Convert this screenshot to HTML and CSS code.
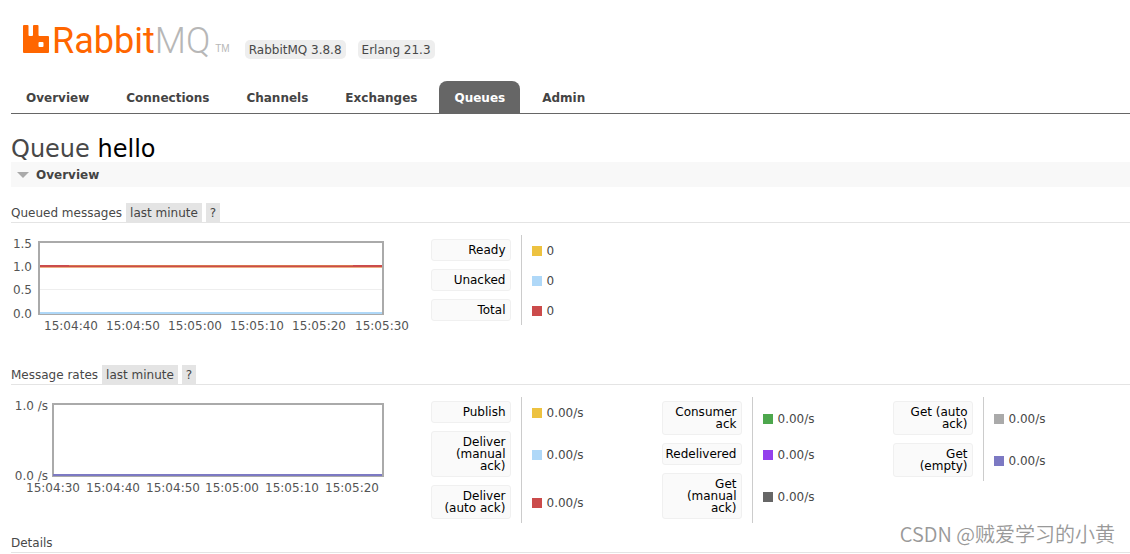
FILE: index.html
```
<!DOCTYPE html>
<html lang="en">
<head>
<meta charset="utf-8">
<meta name="viewport" content="width=device-width, initial-scale=1">
<title>RabbitMQ Management</title>
<link rel="stylesheet" href="styles.css">
</head>
<body>
<header class="header">
  <div class="brand-row">
    <a class="logo" href="#/">
      <svg class="logo-mark" width="26" height="28" viewBox="0 0 26 28" aria-hidden="true">
        <path fill="#f60" fill-rule="evenodd" d="M1 0H4.500Q5.500 0 5.500 1V10Q5.500 11 6.500 11H9Q10 11 10 10V1Q10 0 11 0H14.500Q15.500 0 15.500 1V10Q15.500 11 16.500 11H25Q26 11 26 12V27Q26 28 25 28H1Q0 28 0 27V1Q0 0 1 0ZM16.500 17Q15.500 17 15.500 18V21Q15.500 22 16.500 22H19.500Q20.500 22 20.500 21V18Q20.500 17 19.500 17Z"/>
      </svg>
      <span class="logo-text">Rabbit<span class="logo-mq">MQ</span></span>
      <span class="logo-tm">TM</span>
    </a>
    <ul class="versions">
      <li class="version">RabbitMQ 3.8.8</li>
      <li class="version">Erlang 21.3</li>
    </ul>
  </div>
  <nav class="tabs">
    <a class="tab" href="#/">Overview</a>
    <a class="tab" href="#/connections">Connections</a>
    <a class="tab" href="#/channels">Channels</a>
    <a class="tab" href="#/exchanges">Exchanges</a>
    <a class="tab tab-selected" href="#/queues">Queues</a>
    <a class="tab" href="#/users">Admin</a>
  </nav>
</header>

<main class="main">
  <h1 class="title">Queue <b class="title-name">hello</b></h1>
  <h2 class="section">
    <svg width="12" height="6" viewBox="0 0 12 6" aria-hidden="true"><path fill="#aaa" d="M0 0H12L6 6Z"/></svg>
    Overview
  </h2>

  <h3 class="sub">Queued messages <button class="chip" type="button">last minute</button> <button class="chip" type="button">?</button></h3>
  <div class="stats">
    <svg class="chart" width="410" height="104" viewBox="0 0 410 104" role="img" aria-label="Queued messages">
      <path d="M29 54.500H372" stroke="#eee"/>
      <rect x="28" y="7" width="344" height="72" fill="none" stroke="#aaa" stroke-width="2"/>
      <path d="M29 78H371" stroke="#afd8f8" stroke-width="2"/>
      <path d="M29 31H371" stroke="#cb4b4b" stroke-width="2"/>
      <path d="M58 30.500H342" stroke="#d6764f"/>
      <path d="M29 32.500H371" stroke="#edae84"/>
      <g text-anchor="end">
        <text x="21" y="13">1.5</text><text x="21" y="36">1.0</text><text x="21" y="59">0.5</text><text x="21" y="83">0.0</text>
      </g>
      <g text-anchor="middle">
        <text x="60" y="95">15:04:40</text><text x="122" y="95">15:04:50</text><text x="184" y="95">15:05:00</text><text x="246" y="95">15:05:10</text><text x="308" y="95">15:05:20</text><text x="371" y="95">15:05:30</text>
      </g>
    </svg>
    <table class="legend">
      <tr><th scope="row"><span class="label">Ready</span></th><td><i class="swatch yellow"></i>0</td></tr>
      <tr><th scope="row"><span class="label">Unacked</span></th><td><i class="swatch blue"></i>0</td></tr>
      <tr><th scope="row"><span class="label">Total</span></th><td><i class="swatch red"></i>0</td></tr>
    </table>
  </div>

  <h3 class="sub">Message rates <button class="chip" type="button">last minute</button> <button class="chip" type="button">?</button></h3>
  <div class="stats stats-last">
    <svg class="chart" width="410" height="104" viewBox="0 0 410 104" role="img" aria-label="Message rates">
      <rect x="42" y="7" width="330" height="72" fill="none" stroke="#aaa" stroke-width="2"/>
      <path d="M42 78H371" stroke="#7c79c3" stroke-width="2"/>
      <g text-anchor="end"><text x="37" y="13">1.0 /s</text><text x="37" y="83">0.0 /s</text></g>
      <g text-anchor="middle">
        <text x="42" y="95">15:04:30</text><text x="102" y="95">15:04:40</text><text x="162" y="95">15:04:50</text><text x="221" y="95">15:05:00</text><text x="281" y="95">15:05:10</text><text x="341" y="95">15:05:20</text>
      </g>
    </svg>
    <table class="legend">
      <tr><th scope="row"><span class="label">Publish</span></th><td><i class="swatch yellow"></i>0.00/s</td></tr>
      <tr><th scope="row"><span class="label">Deliver<br>(manual<br>ack)</span></th><td><i class="swatch blue"></i>0.00/s</td></tr>
      <tr><th scope="row"><span class="label">Deliver<br>(auto ack)</span></th><td><i class="swatch red"></i>0.00/s</td></tr>
    </table>
    <table class="legend">
      <tr><th scope="row"><span class="label">Consumer<br>ack</span></th><td><i class="swatch green"></i>0.00/s</td></tr>
      <tr><th scope="row"><span class="label">Redelivered</span></th><td><i class="swatch purple"></i>0.00/s</td></tr>
      <tr><th scope="row"><span class="label">Get<br>(manual<br>ack)</span></th><td><i class="swatch dark"></i>0.00/s</td></tr>
    </table>
    <table class="legend">
      <tr><th scope="row"><span class="label">Get (auto<br>ack)</span></th><td><i class="swatch gray"></i>0.00/s</td></tr>
      <tr><th scope="row"><span class="label">Get<br>(empty)</span></th><td><i class="swatch violet"></i>0.00/s</td></tr>
    </table>
  </div>

  <h3 class="sub sub-last">Details</h3>
</main>
<div class="watermark">CSDN @贼爱学习的小黄</div>
</body>
</html>
```
FILE: styles.css
```
* { box-sizing: border-box; }
body {
  position: relative;
  margin: 0;
  background: #fff;
  color: #484848;
  font: 12px/20px Verdana, "DejaVu Sans", sans-serif;
}
.header { margin-left: 11px; border-bottom: 1px solid #666; }
.brand-row { display: flex; align-items: flex-end; gap: 15px; height: 59px; padding-left: 12px; }
.logo { display: flex; align-items: flex-end; height: 34px; padding-bottom: 6px; text-decoration: none; }
.logo-mark { margin-right: 3px; }
.logo-text { color: #f60; font: 36px/24px Roboto, sans-serif; }
.logo-mq { color: #b7b7b7; font-weight: 300; }
.logo-tm { margin-left: 5px; color: #b7b7b7; font: 10px/8px "Liberation Sans", sans-serif; }
.versions { display: flex; gap: 12px; margin: 0; padding: 0; list-style: none; }
.version { padding: 1px 4px 0; border-radius: 5px; background: #eee; line-height: 18px; }
.tabs { display: flex; gap: 7px; margin-top: 22px; }
.tab { padding: 7px 15px 5px; border-radius: 8px 8px 0 0; color: #444; font-weight: bold; text-decoration: none; }
.tab-selected { background: #666; color: #fff; }
.main { padding: 22px 0 0 11px; }
.title { margin: 0; font-size: 24px; font-weight: normal; line-height: 26px; }
.title-name { color: #000; font-weight: normal; }
.section {
  display: flex;
  align-items: center;
  gap: 7px;
  margin: 0 0 16px;
  padding: 1px 6px 0;
  background: #f8f8f8;
  color: #444;
  font-size: 12px;
  line-height: 24px;
}
.sub {
  display: flex;
  align-items: flex-end;
  gap: 4px;
  height: 20px;
  margin: 0 0 12px;
  border-bottom: 1px solid #e4e4e4;
  font-size: 12px;
  font-weight: normal;
  line-height: 18px;
}
.sub-last { margin-bottom: 0; }
.chip { padding: 1px 4px 0; border: 0; background: #e4e4e4; color: #444; font: inherit; }
.stats { display: flex; align-items: flex-start; min-height: 127px; margin-bottom: 3px; }
.stats-last { margin-bottom: 9px; }
.chart { flex: none; margin-right: 10px; }
.chart text { fill: #545454; font-size: 12px; }
.legend { flex: none; width: 231px; border-collapse: collapse; }
.legend th { width: 90px; padding: 4px 10px 4px 0; font-weight: normal; }
.legend td { padding: 2px 0 0 10px; border-left: 1px solid #ccc; line-height: 20px; }
.label {
  display: block;
  padding: 4px 4px 4px 2px;
  border: 1px solid #f0f0f0;
  border-radius: 3px;
  background: #fafafa;
  color: #000;
  line-height: 12px;
  text-align: right;
}
.swatch { display: inline-block; width: 10px; height: 10px; margin-right: 5px; vertical-align: -1px; }
.yellow { background: #edc240; }
.blue { background: #afd8f8; }
.red { background: #cb4b4b; }
.green { background: #4da74d; }
.purple { background: #9440ed; }
.dark { background: #666; }
.gray { background: #aaa; }
.violet { background: #7c79c3; }
.watermark {
  position: absolute;
  right: 15px;
  bottom: 4px;
  color: #999;
  font: 350 20px/30px "Noto Sans CJK SC", sans-serif;
}
```
